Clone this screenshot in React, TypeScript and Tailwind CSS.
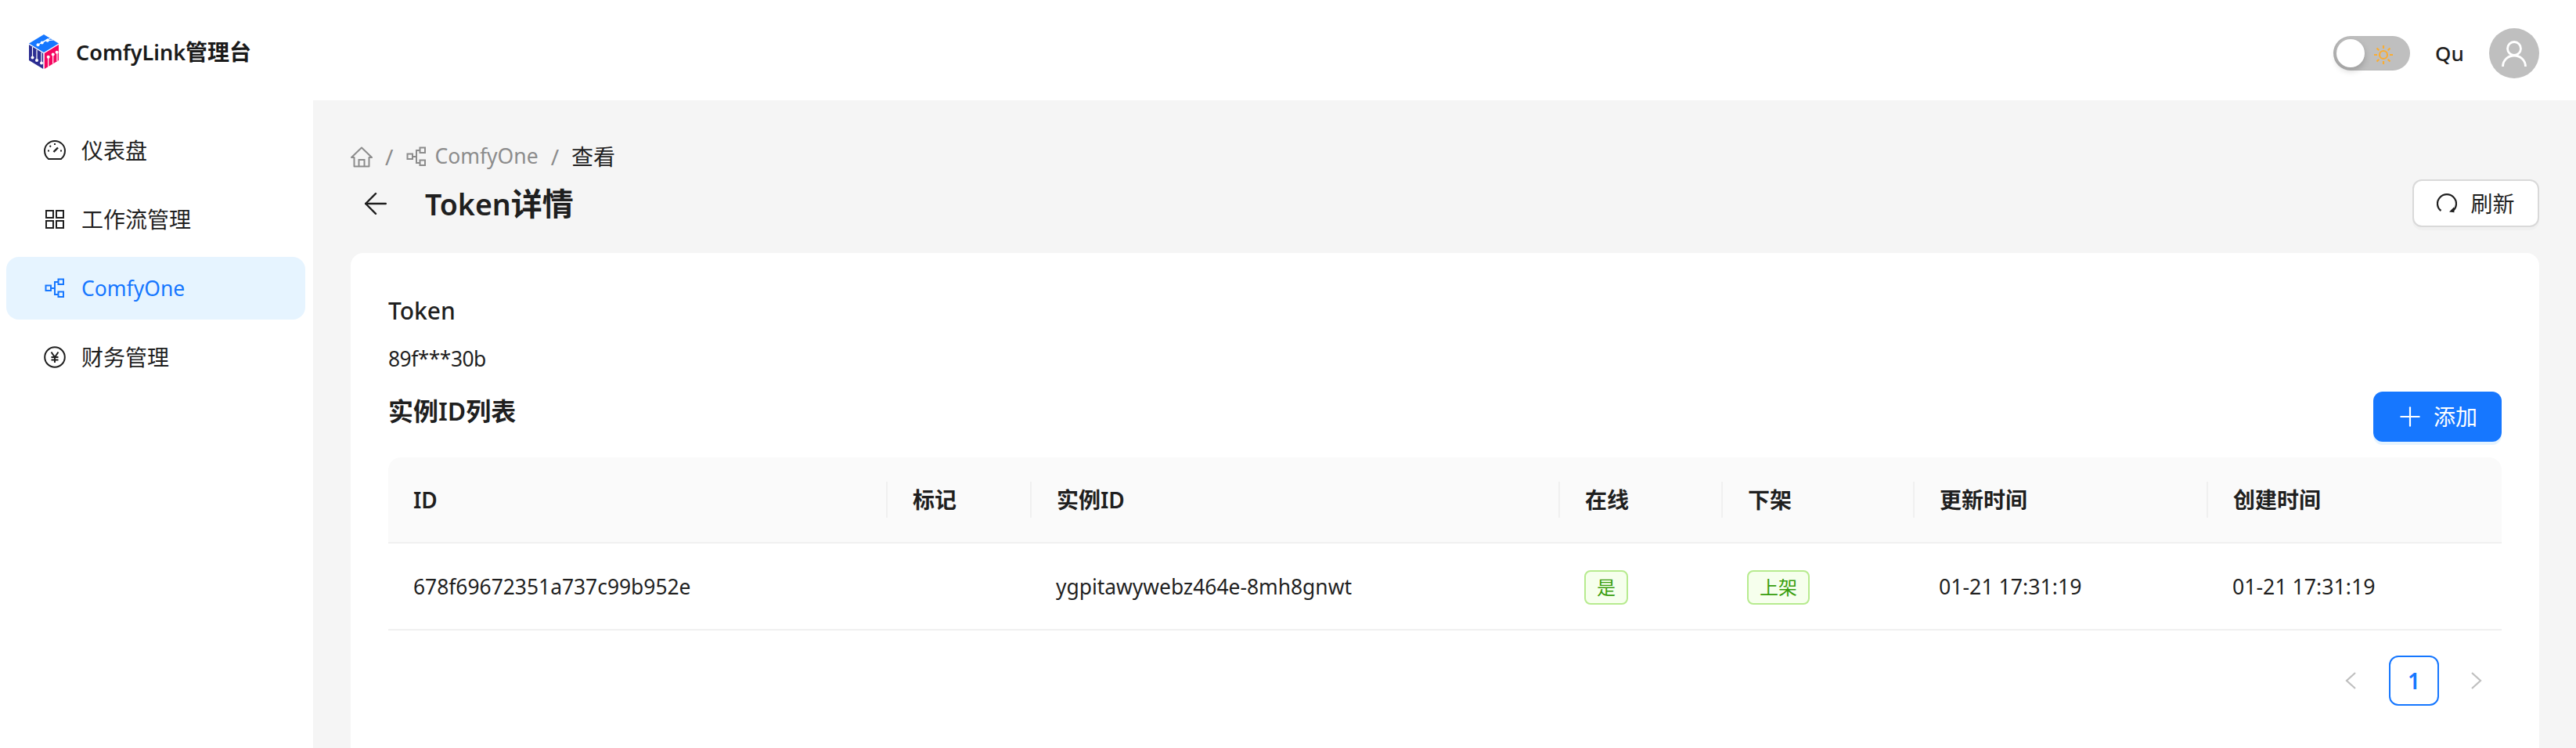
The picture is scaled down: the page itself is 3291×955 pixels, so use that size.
import { ArrowLeft, Plus } from 'lucide-react';

const FONT = 'font-["Noto_Sans","Noto_Sans_CJK_SC",sans-serif]';
const COLS = 'grid-cols-[636px_184px_675px_208px_245px_375px_1fr]';

function LogoIcon() {
  return (
    <svg width="38" height="44" viewBox="0 0 38 44">
      <path d="M19 0 L38 11.5 L19 23 L0 11.5 Z" fill="#1677ff" />
      <path d="M0 13 L18.2 24 L18.2 44 L0 33 Z" fill="#2b2d91" />
      <path d="M38 13 L19.8 24 L19.8 44 L38 33 Z" fill="#f5055f" />
      <g stroke="#fff" strokeWidth="1.2" fill="none">
        <path d="M11.5 13.3 L24.5 5.5 M16.7 10.5 L28 4.5 M23.7 7.7 L31 7" />
        <path d="M4.5 16 V29.4 M10 19.5 V33 M16 23 V36.4" />
        <path d="M24.7 28.7 V41 M30.7 25.5 V37.5 M36 22.8 V34" />
      </g>
      <g fill="#fff">
        <circle cx="11.5" cy="13.3" r="2" />
        <circle cx="16.7" cy="10.5" r="2" />
        <circle cx="23.7" cy="7.7" r="2" />
        <circle cx="4.5" cy="29.4" r="2" />
        <circle cx="10" cy="33" r="2" />
        <circle cx="16" cy="36.4" r="2" />
        <circle cx="24.7" cy="28.7" r="2" />
        <circle cx="30.7" cy="25.5" r="2" />
        <circle cx="35.6" cy="22.8" r="2" />
      </g>
    </svg>
  );
}

function GaugeIcon() {
  return (
    <svg width="28" height="28" viewBox="0 0 28 28" fill="none" stroke="currentColor" strokeWidth="2">
      <path d="M6 25 H22 C24.5 23 27 19 27 14.5 C27 7.5 21 2 14 2 C7 2 1 7.5 1 14.5 C1 19 3.5 23 6 25 Z" strokeLinejoin="round" />
      <path d="M12.5 16 L18 10.5" strokeWidth="2.4" />
      <path d="M14 5 V7 M5 14.5 H7 M21 14.5 H23 M7.5 8 L9 9.5" />
    </svg>
  );
}

function AppsIcon() {
  return (
    <svg width="28" height="28" viewBox="0 0 28 28" fill="none" stroke="currentColor" strokeWidth="2">
      <rect x="3" y="3" width="9" height="9" />
      <rect x="16" y="3" width="9" height="9" />
      <rect x="3" y="16" width="9" height="9" />
      <rect x="16" y="16" width="9" height="9" />
    </svg>
  );
}

function FlowIcon({ size = 28 }: { size?: number }) {
  return (
    <svg width={size} height={size} viewBox="0 0 28 28" fill="none" stroke="currentColor" strokeWidth="2">
      <rect x="2.5" y="10.5" width="6.5" height="6.5" />
      <rect x="18.5" y="2.5" width="6.5" height="6.5" />
      <rect x="18.5" y="18.5" width="6.5" height="6.5" />
      <path d="M9 14 H14 M18.5 6 H14 V22 H18.5" />
    </svg>
  );
}

function YenIcon() {
  return (
    <svg width="28" height="28" viewBox="0 0 28 28" fill="none" stroke="currentColor" strokeWidth="2">
      <circle cx="14" cy="14" r="12.8" />
      <path d="M9.5 7.5 L14 14 L18.5 7.5 M14 14 V21 M9.5 14 H18.5 M9.5 17.5 H18.5" />
    </svg>
  );
}

function HomeIcon() {
  return (
    <svg width="28" height="27" viewBox="0 0 28 27" fill="none" stroke="currentColor" strokeWidth="2">
      <path d="M1 14 L14 1.5 L27 14 H23.5 V25.5 H4.5 V14 Z" strokeLinejoin="round" />
      <path d="M10.5 25.5 V17 H17.5 V25.5" />
    </svg>
  );
}

function ReloadIcon() {
  return (
    <svg width="26" height="26" viewBox="0 0 26 26" fill="none" stroke="currentColor" strokeWidth="2.2">
      <path d="M5.5 22 C2.8 20 1 16.8 1 13 C1 6.5 6.3 1.2 13 1.2 C19.7 1.2 25 6.5 25 13 C25 16.5 23.5 19.6 21 21.8" />
      <path d="M16 23.6 L22.5 24.2 L22 17.4 Z" fill="currentColor" stroke="none" />
    </svg>
  );
}

function SunIcon() {
  return (
    <svg width="24" height="24" viewBox="0 0 24 24" fill="none" stroke="#faad33" strokeWidth="2.2" className="mt-[4px]">
      <circle cx="12" cy="12" r="5" />
      <path d="M12 0 V4 M12 20 V24 M0 12 H4 M20 12 H24 M3.5 3.5 L6.3 6.3 M17.7 17.7 L20.5 20.5 M3.5 20.5 L6.3 17.7 M17.7 6.3 L20.5 3.5" />
    </svg>
  );
}

function UserIcon() {
  return (
    <svg width="32" height="33" viewBox="0 0 32 33" fill="none" stroke="#fff" strokeWidth="2.8">
      <circle cx="16" cy="10" r="8.5" />
      <path d="M1.5 33 C1.5 25 8 19 16 19 C24 19 30.5 25 30.5 33" />
    </svg>
  );
}

function Chevron({ dir }: { dir: 'left' | 'right' }) {
  return (
    <svg width="14" height="22" viewBox="0 0 14 22" fill="none" stroke="#bfbfbf" strokeWidth="2.2">
      <path d={dir === 'left' ? 'M13 1 L2 11 L13 21' : 'M1 1 L12 11 L1 21'} />
    </svg>
  );
}

const navItems = [
  { label: '仪表盘', icon: <GaugeIcon /> },
  { label: '工作流管理', icon: <AppsIcon /> },
  { label: 'ComfyOne', icon: <FlowIcon />, active: true },
  { label: '财务管理', icon: <YenIcon /> },
];

function Tag({ text }: { text: string }) {
  return (
    <span className="inline-flex h-[44px] items-center rounded-[8px] border-2 border-[#b7eb8f] bg-[#f6ffed] px-[14px] text-[24px] text-[#389e0d]">
      {text}
    </span>
  );
}

function HeaderCell({ text }: { text: string }) {
  return (
    <div className="relative flex items-center pl-[34px] pr-[30px] text-[28px] font-semibold">
      {text}
      <span className="absolute left-0 top-1/2 h-[46px] w-[2px] -translate-y-1/2 bg-[#f0f0f0]" />
    </div>
  );
}

export default function App() {
  return (
    <div className={`${FONT} flex h-[955px] flex-col overflow-hidden bg-[#f5f5f5] text-[28px] text-[#1f1f1f]`}>
      <header className="flex h-[128px] shrink-0 items-center justify-between bg-white pl-[37px] pr-[47px] pt-[4px]">
        <div className="flex items-center gap-[22px]">
          <LogoIcon />
          <span className="font-semibold text-[#1a1a1a]">
            <span className="text-[27px]">ComfyLink</span>管理台
          </span>
        </div>
        <div className="flex items-center pt-[4px]">
          <div className="flex h-[44px] w-[98px] items-center justify-between rounded-full bg-[#bfbfbf] pl-[4px] pr-[22px] shadow-[inset_2px_0_2px_rgba(0,0,0,0.08)]">
            <span className="h-[36px] w-[36px] rounded-full bg-white shadow-[0_4px_8px_rgba(0,0,0,0.2)]" />
            <SunIcon />
          </div>
          <span className="ml-[32px] w-[37px] text-[26px] font-medium">Qu</span>
          <div className="ml-[32px] flex h-[64px] w-[64px] items-center justify-center rounded-full bg-[#bfbfbf]">
            <UserIcon />
          </div>
        </div>
      </header>

      <div className="flex min-h-0 flex-1">
        <aside className="flex w-[400px] shrink-0 flex-col gap-[8px] bg-white py-[24px] pl-[8px] pr-[10px]">
          {navItems.map((item) => (
            <div
              key={item.label}
              className={`flex h-[80px] items-center gap-[20px] rounded-[16px] pl-[48px] ${item.active ? 'bg-[#e6f4ff] text-[#1677ff]' : ''}`}
            >
              {item.icon}
              <span className={item.active ? 'mt-[2px] text-[26.5px]' : ''}>{item.label}</span>
            </div>
          ))}
        </aside>

        <main className="min-w-0 flex-1 pl-[48px] pr-[47px] pt-[50px]">
          <div className="flex h-[44px] items-center text-[#8c8c8c]">
            <HomeIcon />
            <span className="mx-[16px]">/</span>
            <FlowIcon />
            <span className="ml-[9px] text-[26.5px]">ComfyOne</span>
            <span className="mx-[16px]">/</span>
            <span className="text-[#1f1f1f]">查看</span>
          </div>

          <div className="mb-[33px] mt-[7px] flex h-[61px] items-center justify-between">
            <div className="flex items-center">
              <ArrowLeft size={44} strokeWidth={1.3} className="ml-[10px]" />
              <h1 className="ml-[41px] text-[40px] font-semibold leading-none">
                <span className="text-[37.5px]">Token</span>详情
              </h1>
            </div>
            <button className="flex h-[61px] w-[162px] items-center justify-center gap-[17px] rounded-[12px] border-2 border-[#d9d9d9] bg-white shadow-[0_4px_0_rgba(0,0,0,0.02)]">
              <ReloadIcon />
              <span>刷新</span>
            </button>
          </div>

          <section className="h-[700px] rounded-[16px] bg-white px-[48px] pt-[54px]">
            <div className="text-[30px] font-medium leading-[40px]">Token</div>
            <div className="mt-[21px] text-[26.4px] leading-[40px] tracking-[-0.5px]">89f***30b</div>

            <div className="mt-[22px] flex h-[64px] items-start justify-between">
              <h2 className="mt-[3px] text-[32px] font-semibold leading-[44px]">实例ID列表</h2>
              <button className="flex h-[64px] w-[164px] items-center justify-center gap-[10px] rounded-[12px] bg-[#1677ff] pr-[4px] text-white shadow-[0_4px_0_rgba(5,145,255,0.1)]">
                <Plus size={40} strokeWidth={1.3} />
                <span>添加</span>
              </button>
            </div>

            <div className="mt-[20px]">
              <div className={`grid h-[110px] ${COLS} rounded-t-[16px] border-b-2 border-[#f0f0f0] bg-[#fafafa]`}>
                <div className="flex items-center px-[32px] font-semibold">ID</div>
                <HeaderCell text="标记" />
                <HeaderCell text="实例ID" />
                <HeaderCell text="在线" />
                <HeaderCell text="下架" />
                <HeaderCell text="更新时间" />
                <HeaderCell text="创建时间" />
              </div>
              <div className={`grid h-[111px] ${COLS} items-center border-b-2 border-[#f0f0f0] pt-[2px] text-[26.4px] [&>div]:pl-[33px]`}>
                <div className="!pl-[32px]">678f69672351a737c99b952e</div>
                <div />
                <div>ygpitawywebz464e-8mh8gnwt</div>
                <div><Tag text="是" /></div>
                <div><Tag text="上架" /></div>
                <div className="text-[26.7px]">01-21 17:31:19</div>
                <div className="text-[26.7px]">01-21 17:31:19</div>
              </div>
            </div>

            <div className="mt-[32px] flex items-center justify-end pr-[25px]">
              <Chevron dir="left" />
              <span className="ml-[42px] mr-[41px] flex h-[64px] w-[64px] items-center justify-center rounded-[12px] border-2 border-[#1677ff] font-semibold text-[#1677ff]">1</span>
              <Chevron dir="right" />
            </div>
          </section>
        </main>
      </div>
    </div>
  );
}
